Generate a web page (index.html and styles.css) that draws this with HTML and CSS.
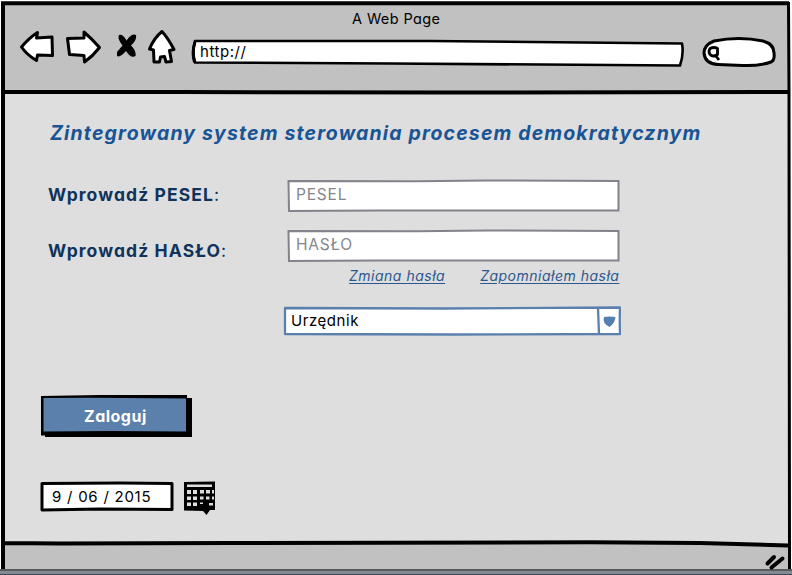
FILE: index.html
```html
<!DOCTYPE html>
<html lang="pl">
<head>
<meta charset="utf-8">
<title>A Web Page</title>
<link rel="stylesheet" href="styles.css">
</head>
<body>
<div class="window stack">
  <svg class="frame" width="792" height="575" viewBox="0 0 792 575">
    <path fill="#c1c1c1" d="M3 3H788V570H3z"/>
    <path fill="#dedede" d="M3 92H788V545L600 543H3z"/>
    <path class="ink w4" d="M1 3.300H789M3 2V570M2 92H180L450 92.500L788 92M3 543L60 543.500L230 543L590 542.300L700 543L788 545.500"/>
    <path class="ink w3" d="M788.500 2L789 92L789.500 570"/>
    <path fill="#5a5b5c" d="M0 569H792V571H0z"/><path fill="#858a90" d="M0 571H792V574H0z"/><path fill="#3b4656" d="M0 574H792V575H0z"/>
  </svg>
  <div class="layout">
    <header class="toolbar">
      <div class="title">A Web Page</div>
      <div class="controls">
        <svg class="back" width="36" height="34" viewBox="0 0 36 34"><path class="ink shape" d="M2.500 18Q10 9 18.500 3.500L17.500 9L33 8L33.500 26.500L18.500 26L17.500 31.500Q8 26 2.500 18z"/></svg>
        <svg class="next" width="38" height="36" viewBox="0 0 38 36"><path class="ink shape" d="M2.500 9.500L19 9V3Q27 10 34.500 18.500Q28 27 19.500 33L19 26.500L4.500 25.500z"/></svg>
        <svg class="stop" width="22" height="26" viewBox="0 0 22 26"><path d="M3 1Q7 0 10.500 6.500Q16 -1 20 1Q21 6 15 11.500Q20.500 17 19.500 22Q15 25 10 17Q4 24 1 22V18L6.500 11.500Q1 4 3 1z"/></svg>
        <svg class="home" width="30" height="38" viewBox="0 0 30 38"><path class="ink shape" d="M15 2.500Q21 9 27 20.500L22.500 21.500L24.500 32.500L19 33L17.500 27.500L13.500 28L12.500 33L7 33L6.500 21L2.500 20Q7 9 15 2.500z"/></svg>
        <div class="address stack">
          <svg width="496" height="32" viewBox="0 0 496 32"><path class="ink shape addr" d="M5 5L240 5L492 7.500Q494 18 490 29.500L200 27.500L5 26.500Q2 17 5 5z"/><path class="ink" d="M5 6Q1.500 16 4.500 26"/></svg>
          <span class="url">http://</span>
        </div>
        <svg class="search" width="78" height="34" viewBox="0 0 78 34"><path class="ink shape" d="M13 5Q38 0 62 5Q73 8 73 17Q74 24 70 26Q59 30 42 29.500L17 28.500Q4 28 3 17Q3 9 13 5z"/><path class="ink lens" d="M9 12.500Q13 10.500 16.500 12.500V18.500Q12 21.500 9 18.500Q7 15 9 12.500zM14.500 19.500L18 24"/></svg>
      </div>
    </header>
    <main class="page">
      <h1>Zintegrowany system sterowania procesem demokratycznym</h1>
      <div class="row first">
        <label class="pesel">Wprowadź PESEL<span class="colon">:</span></label>
        <div class="field stack">
          <svg width="334" height="34" viewBox="0 0 334 34"><path class="gray" d="M1.500 2L130 2.200L200 1.500L331.500 2V31.500H90L2 32z"/></svg>
          <span class="hint">PESEL</span>
        </div>
      </div>
      <div class="row second">
        <label class="haslo">Wprowadź HASŁO<span class="colon">:</span></label>
        <div class="field stack">
          <svg width="334" height="34" viewBox="0 0 334 34"><path class="gray" d="M1.500 2L130 2.200L200 1.500L331.500 2V31.500H90L2 32z"/></svg>
          <span class="hint">HASŁO</span>
        </div>
      </div>
      <div class="links"><a class="change">Zmiana hasła</a><a class="forgot">Zapomniałem hasła</a></div>
      <div class="select stack">
        <svg width="338" height="30" viewBox="0 0 338 30"><path class="blue" d="M2 2L160 2.500L337 1.500Q336.500 14 337 28L170 28.500L2 28z"/><path class="blue" d="M315 2L316 28"/><path fill="#557eb1" d="M321 11Q326 10 332.500 11Q332 17 326.500 21Q319 17 321 11z"/></svg>
        <span class="value">Urzędnik</span>
      </div>
      <div class="button stack">
        <svg width="154" height="44" viewBox="0 0 154 44"><path d="M1 1L60 0L147 0V3H152V42H5V40.500H1z"/><path fill="#5b80ab" d="M3.500 3L50 2.800L146 3.500V36.500L70 36L3.500 36.500z"/></svg>
        <span class="caption">Zaloguj</span>
      </div>
      <div class="dates">
        <div class="date stack">
          <svg width="136" height="32" viewBox="0 0 136 32"><path class="ink shape" d="M2 2.500L80 2L132 2.500V28.500L60 28L2 29z"/></svg>
          <span class="day">9 / 06 / 2015</span>
        </div>
        <svg class="calendar" width="32" height="36" viewBox="0 0 32 36"><path d="M0 1L31 0.500V29H26L22.500 34L19 30L0 29.500z"/><path fill="#dedede" d="M3 3.500H28V6H3zM3 9h4v4H3zM9 9h4v4H9zM16 9h4v3.500h-4zM22 9h4v3.500h-4zM28 9h2v3.500h-2zM3 15.500h4v3.500H3zM9 15.500h4v3.500H9zM16 15.500h3.500v3h-3.500zM22 15.500h3.500v3H22zM28 15.500h2v3h-2zM3 21.500h4v3.500H3zM9 21.500h4v3.500H9zM16 21.500h3v1.500h-3zM25 22h4v2.500h-4z"/></svg>
      </div>
    </main>
    <footer class="status"><svg width="24" height="18" viewBox="0 0 24 18"><path class="ink w4" d="M4.500 10.500L11 4M8.500 14.500L19.500 5.500" stroke-linecap="round"/></svg></footer>
  </div>
</div>
</body>
</html>
```

FILE: styles.css
```css
* { box-sizing: border-box; }
body { margin: 0; width: 792px; height: 575px; overflow: hidden; background: #fff; color: #000; font-family: Inter, "Open Sans", sans-serif; font-feature-settings: "cv11", "ss03"; font-size: 15px; line-height: 20px; }
svg { display: block; flex: none; }
span, a, label, h1, .title { white-space: nowrap; }
.stack { display: grid; align-items: start; justify-items: start; }
.stack > * { grid-area: 1 / 1; }
.ink { stroke: #000; stroke-width: 3; fill: none; stroke-linejoin: round; }
.w4 { stroke-width: 4; }
.w3 { stroke-width: 3; }
.shape { fill: #fff; }
.addr { stroke-width: 2.6; }
.lens { stroke-width: 2.8; }
.gray { fill: #fff; stroke: #83838b; stroke-width: 2; }
.blue { fill: #fff; stroke: #5b80ad; stroke-width: 2.3; stroke-linejoin: round; }
.window { width: 792px; height: 575px; }
.layout { display: flex; flex-direction: column; width: 792px; height: 575px; }
.toolbar { height: 94px; padding-top: 9px; }
.title { width: fit-content; margin-left: 352px; font-size: 14.500px; letter-spacing: 0.4px; }
.controls { display: flex; align-items: flex-start; padding-left: 19px; }
.back { margin-top: 0; }
.next { margin: 0 0 0 10px; }
.stop { margin: 5px 0 0 13px; }
.home { margin-left: 9px; }
.address { margin: 7px 0 0 13px; }
.url { padding: 6px 0 0 10px; letter-spacing: 0.55px; }
.search { margin: 7px 0 0 15px; }
.page { height: 447px; padding: 26px 0 0 40px; }
h1 { width: fit-content; margin: 0 0 0 10px; font-size: 19.500px; line-height: 26px; font-weight: 700; font-style: italic; letter-spacing: 1.14px; color: #195494; }
.row { display: grid; grid-template-columns: 239px 334px; padding-left: 8px; height: 34px; }
.first { margin-top: 33px; }
.second { margin-top: 16px; }
label { width: fit-content; color: #0f335b; font-size: 17.500px; line-height: 24px; font-weight: 700; padding-top: 4px; letter-spacing: 1.1px; }
.colon { font-weight: 400; }
.haslo { padding-top: 10px; }
.hint { padding: 6px 0 0 9px; font-size: 15.500px; letter-spacing: 0.8px; color: #85858b; }
.links { display: flex; padding-left: 309px; gap: 35px; margin-top: 3px; height: 21px; }
.links a { color: #2c5890; font-style: italic; font-size: 14px; letter-spacing: 0.5px; text-decoration: underline; text-underline-offset: 2px; }
.select { margin: 19px 0 0 243px; height: 30px; }
.value { padding: 5px 0 0 8px; letter-spacing: 0.55px; }
.button { margin-top: 59px; height: 44px; }
.caption { padding: 11px 0 0 44px; color: #fff; font-size: 16px; font-weight: 700; letter-spacing: 0.5px; }
.dates { display: flex; margin-top: 42px; }
.day { padding: 6px 0 0 12px; letter-spacing: 0.75px; }
.calendar { margin-left: 8px; }
.status { height: 34px; padding: 12px 0 0 763px; }
```
